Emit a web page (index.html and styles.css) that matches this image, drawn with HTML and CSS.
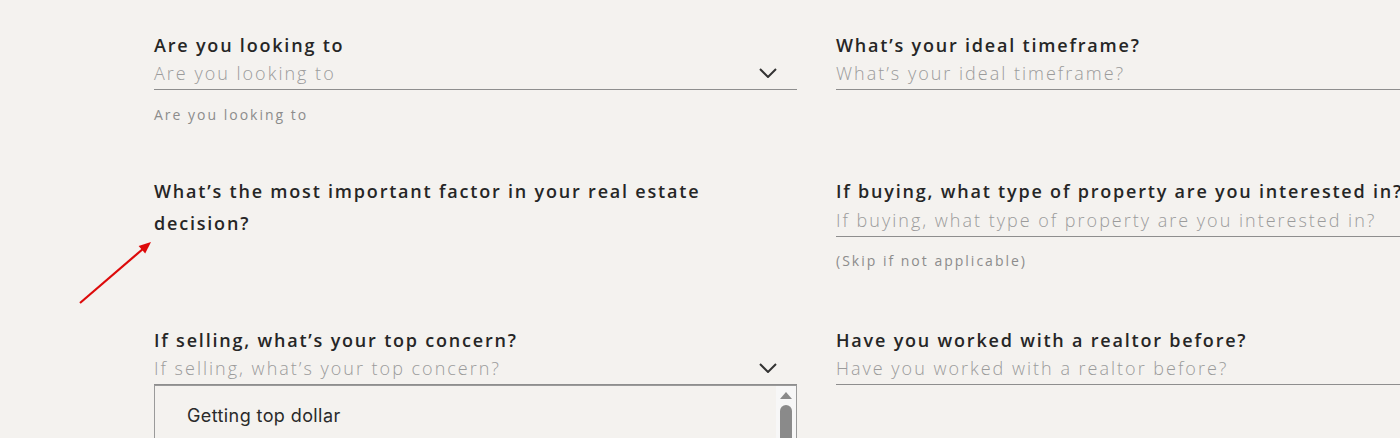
FILE: index.html
```html
<!DOCTYPE html>
<html lang="en">
<head>
<meta charset="utf-8">
<title>Questionnaire</title>
<link rel="stylesheet" href="styles.css">
</head>
<body>
<main class="form">
  <div class="field">
    <label class="label">Are you looking to</label>
    <div class="select">
      <span class="placeholder">Are you looking to</span>
      <svg class="chevron" width="18" height="10" viewBox="0 0 18 10"><path d="M1 1 L9 9 L17 1" fill="none" stroke="#333" stroke-width="2"/></svg>
    </div>
    <p class="helper">Are you looking to</p>
  </div>
  <div class="field">
    <label class="label">What’s your ideal timeframe?</label>
    <div class="input"><span class="placeholder">What’s your ideal timeframe?</span></div>
  </div>

  <div class="field">
    <label class="label">What’s the most important factor in your real estate decision?</label>
  </div>
  <div class="field field-tall">
    <label class="label">If buying, what type of property are you interested in?</label>
    <div class="input"><span class="placeholder">If buying, what type of property are you interested in?</span></div>
    <p class="helper">(Skip if not applicable)</p>
  </div>

  <div class="field has-menu">
    <label class="label">If selling, what’s your top concern?</label>
    <div class="select">
      <span class="placeholder">If selling, what’s your top concern?</span>
      <svg class="chevron" width="18" height="10" viewBox="0 0 18 10"><path d="M1 1 L9 9 L17 1" fill="none" stroke="#333" stroke-width="2"/></svg>
    </div>
    <div class="menu">
      <ul class="options">
        <li>Getting top dollar</li>
      </ul>
      <div class="scrollbar">
        <span class="arrow-up"></span>
        <span class="thumb"></span>
      </div>
    </div>
  </div>
  <div class="field">
    <label class="label">Have you worked with a realtor before?</label>
    <div class="input"><span class="placeholder">Have you worked with a realtor before?</span></div>
  </div>
</main>
<svg class="annotation" width="90" height="80" viewBox="0 0 90 80">
  <line x1="4" y1="69" x2="68" y2="14" stroke="#dd0a0a" stroke-width="2.2"/>
  <path d="M75 8 L69.2 19.6 L62.6 12 Z" fill="#dd0a0a"/>
</svg>
</body>
</html>
```

FILE: styles.css
```css
html, body {
  margin: 0;
  padding: 0;
  background: #f4f2ef;
  overflow: hidden;
  height: 438px;
}

body {
  font-family: "Open Sans", "DejaVu Sans", sans-serif;
  color: #262626;
  position: relative;
}

.form {
  display: grid;
  grid-template-columns: 643px 643px;
  column-gap: 39px;
  row-gap: 50px;
  padding: 29px 0 0 154px;
  width: 1479px;
}

.field {
  display: flex;
  flex-direction: column;
}

.field-tall {
  padding-bottom: 3px;
}

.field-tall .input {
  height: 29px;
}

.field-tall .helper {
  margin-top: 14px;
}

.has-menu {
  position: relative;
}

.label {
  font-size: 18px;
  font-weight: 600;
  line-height: 32px;
  letter-spacing: 1.8px;
  color: #262626;
}

.select,
.input {
  display: flex;
  align-items: center;
  justify-content: space-between;
  height: 28px;
  border-bottom: 1px solid #8e8e8e;
}

.placeholder {
  font-size: 18px;
  font-weight: 300;
  letter-spacing: 2px;
  color: #9b9b9b;
  line-height: 24px;
  margin-top: -4px;
  white-space: nowrap;
}

.chevron {
  margin-right: 20px;
  margin-top: -4px;
}

.helper {
  margin: 15px 0 0;
  font-size: 14px;
  line-height: 20px;
  letter-spacing: 2px;
  color: #8c8c8c;
  font-weight: 400;
}

.menu {
  position: absolute;
  left: 0;
  top: 61px;
  width: 641px;
  height: 120px;
  border: 1px solid #9a9a9a;
  background: #f4f2ef;
  display: flex;
}

.options {
  list-style: none;
  margin: 0;
  padding: 13px 0 0 32px;
  flex: 1;
  font-family: "Inter", "Open Sans", sans-serif;
  font-size: 18px;
  letter-spacing: 0.4px;
  color: #2a2a2a;
}

.options li {
  line-height: 34px;
  height: 34px;
}

.scrollbar {
  width: 20px;
  background: #f7f7f7;
  display: flex;
  flex-direction: column;
  align-items: center;
  padding-top: 6px;
  gap: 6px;
}

.arrow-up {
  width: 0;
  height: 0;
  border-left: 6px solid transparent;
  border-right: 6px solid transparent;
  border-bottom: 7px solid #8a8a8a;
}

.thumb {
  width: 12px;
  height: 80px;
  border-radius: 6px;
  background: #8a8a8a;
}

.annotation {
  position: absolute;
  left: 76px;
  top: 234px;
}
```
